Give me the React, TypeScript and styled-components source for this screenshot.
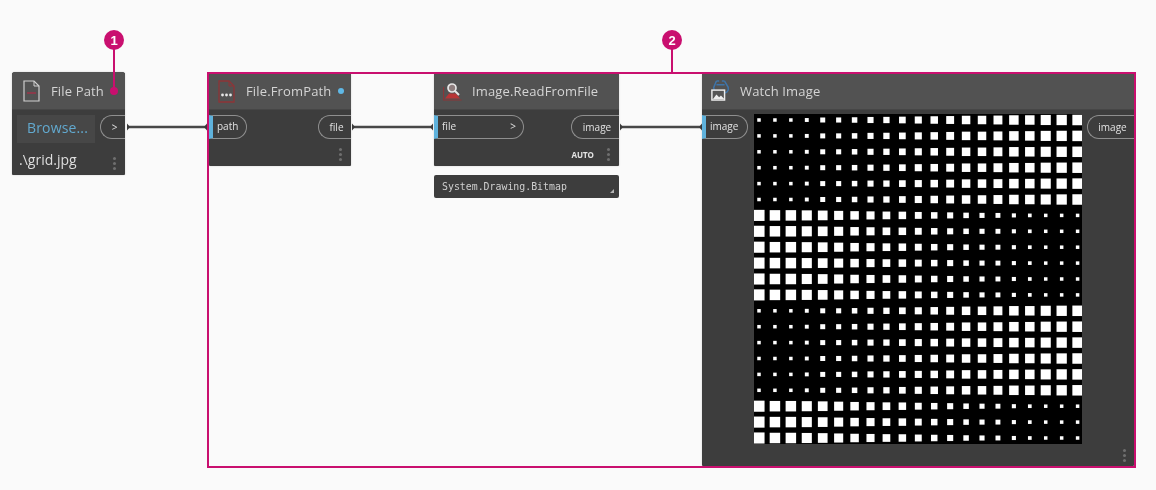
import React from "react";
import styled, { createGlobalStyle } from "styled-components";

const Global = createGlobalStyle`
  html, body { margin: 0; padding: 0; background: #fafafa; }
  #root { width: 1156px; height: 490px; overflow: hidden; }
`;

const Canvas = styled.div`
  position: relative;
  width: 1156px;
  height: 490px;
  background: #fafafa;
  overflow: hidden;
  font-family: "Open Sans", "Noto Sans", sans-serif;
  filter: blur(0.35px);
`;

const Node = styled.section<{ $x: number; $y: number; $w: number; $h: number }>`
  position: absolute;
  left: ${(p) => p.$x}px;
  top: ${(p) => p.$y}px;
  width: ${(p) => p.$w}px;
  height: ${(p) => p.$h}px;
  display: flex;
  flex-direction: column;
  background: #3d3d3d;
  border-radius: 3px 3px 1px 1px;
  overflow: hidden;
  box-shadow: 0 0 2px rgba(0, 0, 0, 0.18);
`;

const Header = styled.header<{ $h: number; $pad: number }>`
  flex: none;
  height: ${(p) => p.$h}px;
  padding-left: ${(p) => p.$pad}px;
  display: flex;
  align-items: center;
  gap: 10px;
  background: #525252;
  box-shadow: 0 1px 0 #464646;
`;

const Title = styled.span`
  color: #d4d4d4;
  font-size: 13px;
  letter-spacing: 0.15px;
  white-space: nowrap;
`;

const StatusDot = styled.i`
  width: 6px;
  height: 6px;
  margin-left: -3px;
  border-radius: 50%;
  background: #5fb8e6;
`;

const Body = styled.div`
  flex: 1;
  min-height: 0;
  position: relative;
  display: flex;
  flex-direction: column;
  padding-top: 6px;
`;

const PortRow = styled.div`
  display: flex;
  justify-content: space-between;
  align-items: flex-start;
  gap: 6px;
`;

const Port = styled.div<{ $side: "in" | "out"; $w: number }>`
  box-sizing: border-box;
  flex: none;
  width: ${(p) => p.$w}px;
  height: 24px;
  display: flex;
  align-items: center;
  justify-content: ${(p) => (p.$side === "in" ? "space-between" : "center")};
  padding: ${(p) => (p.$side === "in" ? "0 7px 2px 4px" : "0 0 0 3px")};
  color: #e2e2e2;
  font-size: 10px;
  border: 1px solid #8f8f8f;
  ${(p) =>
    p.$side === "in"
      ? `border-left: 4px solid #5fb2dc; border-radius: 0 12px 12px 0;`
      : `border-right: none; border-radius: 12px 0 0 12px;`}
`;

const Browse = styled.div`
  flex: none;
  box-sizing: border-box;
  width: 78px;
  height: 28px;
  padding: 0 0 4px 3px;
  display: flex;
  align-items: center;
  justify-content: center;
  background: #474747;
  color: #62a9cf;
  font-size: 14px;
  letter-spacing: 0.15px;
`;

const BrowseRow = styled.div`
  display: flex;
  justify-content: space-between;
  align-items: flex-start;
  padding-left: 5px;
`;

const PathText = styled.div`
  margin: 7px 0 0 7px;
  color: #dedede;
  font-size: 14px;
`;

const Kebab = styled.span<{ $r: number; $b: number }>`
  position: absolute;
  right: ${(p) => p.$r}px;
  bottom: ${(p) => p.$b}px;
  display: flex;
  flex-direction: column;
  gap: 2px;
  & > i {
    width: 3px;
    height: 3px;
    border-radius: 50%;
    background: #6f6f6f;
  }
`;

const Auto = styled.span`
  position: absolute;
  right: 25px;
  bottom: 6px;
  color: #e4e4e4;
  font-size: 8px;
  font-weight: 700;
`;

const Preview = styled.div`
  position: absolute;
  left: 434px;
  top: 175px;
  width: 185px;
  height: 23px;
  box-sizing: border-box;
  padding-left: 8px;
  display: flex;
  align-items: center;
  background: #3d3d3d;
  border-radius: 2px;
  color: #cfcfcf;
  font-family: "DejaVu Sans Mono", "Liberation Mono", monospace;
  font-size: 9.9px;
`;

const Grip = styled.i`
  position: absolute;
  right: 5px;
  bottom: 5px;
  width: 0;
  height: 0;
  border-left: 4px solid transparent;
  border-bottom: 4px solid #b5b5b5;
`;

const WatchRow = styled.div`
  display: flex;
  align-items: flex-start;
  margin-top: -1px;
`;

const WatchPort = styled(Port)`
  margin-top: 1px;
`;

const Group = styled.div`
  position: absolute;
  left: 207px;
  top: 72px;
  width: 929px;
  height: 396px;
  box-sizing: border-box;
  border: 2px solid #c90f6f;
  pointer-events: none;
`;

const Badge = styled.div<{ $x: number }>`
  position: absolute;
  left: ${(p) => p.$x - 10}px;
  top: 30px;
  width: 20px;
  height: 20px;
  display: flex;
  align-items: center;
  justify-content: center;
  border-radius: 50%;
  background: #c90f6f;
  color: #fff;
  font-family: "Liberation Sans", sans-serif;
  font-weight: 700;
  font-size: 13px;
`;

const Leader = styled.div<{ $x: number; $h: number }>`
  position: absolute;
  left: ${(p) => p.$x - 1}px;
  top: 40px;
  width: 2px;
  height: ${(p) => p.$h}px;
  background: #c90f6f;
`;

const LeaderDot = styled.div`
  position: absolute;
  left: 110px;
  top: 87px;
  width: 8px;
  height: 8px;
  border-radius: 50%;
  background: #c90f6f;
`;

const Wires = styled.svg`
  position: absolute;
  left: 0;
  top: 0;
  pointer-events: none;
`;

const Dots = () => (
  <>
    <i />
    <i />
    <i />
  </>
);

const FileIcon = () => (
  <svg width="18" height="22" viewBox="0 0 18 22" fill="none">
    <path d="M1 1h10l5 5v15H1z" stroke="#cfcfcf" strokeWidth="1.2" />
    <path d="M11 1v5h5" stroke="#cfcfcf" strokeWidth="1" />
    <path d="M4 13h9" stroke="#8a3a4a" strokeWidth="2" />
  </svg>
);

const FromPathIcon = () => (
  <svg width="18" height="23" viewBox="0 0 18 23" fill="none">
    <path d="M1 1h10l5 5v16H1z" stroke="#8e3437" strokeWidth="1.3" />
    <path d="M11 1v5h5" stroke="#8e3437" strokeWidth="1" />
    <circle cx="4.5" cy="15" r="1.4" fill="#e8e8e8" />
    <circle cx="8.5" cy="15" r="1.4" fill="#e8e8e8" />
    <circle cx="12.5" cy="15" r="1.4" fill="#e8e8e8" />
  </svg>
);

const ReadIcon = () => (
  <svg width="19" height="19" viewBox="0 0 19 19" fill="none">
    <path d="M0.6 5v13h18" stroke="#8e3437" strokeWidth="1.1" />
    <path d="M2 16.5l4-5h7l4 5z" fill="#b83536" />
    <circle cx="9" cy="6" r="4" fill="#8d7d7d" stroke="#e6e6e6" strokeWidth="1.7" />
    <path d="M12 9l4 4" stroke="#e6e6e6" strokeWidth="1.9" />
  </svg>
);

const WatchIcon = () => (
  <svg width="19" height="22" viewBox="0 0 21 24" fill="none">
    <path
      d="M6 1L3 8c0 4 3 6 6 6M15 1l4 7c1 4-2 7-6 6M6 5h9M6 1h3M12 1h3"
      stroke="#3f74a8"
      strokeWidth="1.7"
    />
    <rect x="1" y="11" width="14" height="11" fill="#555" stroke="#ececec" strokeWidth="1.6" />
    <path d="M2 21l4-5 3 3 2-2 4 4z" fill="#ececec" />
  </svg>
);

const sizeUp = [3, 3, 3, 3.4, 4.5, 4.6, 5, 5.6, 5.8, 6.2, 6.6, 7, 7.4, 8, 8, 8.4, 9, 9, 9.6, 9.8, 10];
const sizeDown = [10.6, 10, 10, 9.6, 9.2, 8.6, 8, 7.6, 7.2, 7, 6.4, 6, 5.6, 5, 4.6, 4.4, 3.6, 3.2, 3, 3, 3];

const Halftone = styled.svg`
  flex: none;
  display: block;
  margin: 0 5px 0 6px;
  background: #000;
`;

const HalftoneImage = () => {
  const squares: React.ReactNode[] = [];
  for (let r = 0; r < 21; r++) {
    const table = r < 6 || (r >= 12 && r < 18) ? sizeUp : sizeDown;
    for (let c = 0; c < 21; c++) {
      const s = table[c] + 0.5;
      const cx = 5 + c * 15.93;
      const cy = 6 + r * 15.9;
      squares.push(<rect key={`${r}-${c}`} x={cx - s / 2} y={cy - s / 2} width={s} height={s} fill="#fff" />);
    }
  }
  return (
    <Halftone width="328" height="330" viewBox="0 0 328 330">
      {squares}
    </Halftone>
  );
};

const wires = [
  [127, 207],
  [352, 433],
  [620, 702],
];

export default function App() {
  return (
    <Canvas>
      <Global />
      <Wires width="1156" height="490" viewBox="0 0 1156 490">
        {wires.map(([a, b]) => (
          <g key={a}>
            <path d={`M${a} 127H${b}`} stroke="#474747" strokeWidth="2.4" />
            <path d={`M${a} 123.5l3 3.5l-3 3.5z`} fill="#3a3a3a" />
            <path d={`M${b} 123.5l-3 3.5l3 3.5z`} fill="#3a3a3a" />
          </g>
        ))}
      </Wires>

      <Node $x={12} $y={72} $w={113} $h={103}>
        <Header $h={37} $pad={11}>
          <FileIcon />
          <Title>File Path</Title>
        </Header>
        <Body>
          <BrowseRow>
            <Browse>Browse...</Browse>
            <Port $side="out" $w={25}>&gt;</Port>
          </BrowseRow>
          <PathText>.\grid.jpg</PathText>
          <Kebab $r={9} $b={5}>
            <Dots />
          </Kebab>
        </Body>
      </Node>

      <Node $x={209} $y={73} $w={142} $h={93}>
        <Header $h={36} $pad={9}>
          <FromPathIcon />
          <Title>File.FromPath</Title>
          <StatusDot />
        </Header>
        <Body>
          <PortRow>
            <Port $side="in" $w={38}>path</Port>
            <Port $side="out" $w={33}>file</Port>
          </PortRow>
          <Kebab $r={9} $b={5}>
            <Dots />
          </Kebab>
        </Body>
      </Node>

      <Node $x={434} $y={73} $w={185} $h={93}>
        <Header $h={36} $pad={9}>
          <ReadIcon />
          <Title>Image.ReadFromFile</Title>
        </Header>
        <Body>
          <PortRow>
            <Port $side="in" $w={90}>
              <span>file</span>
              <span>&gt;</span>
            </Port>
            <Port $side="out" $w={48}>image</Port>
          </PortRow>
          <Auto>AUTO</Auto>
          <Kebab $r={9} $b={5}>
            <Dots />
          </Kebab>
        </Body>
      </Node>

      <Preview>
        System.Drawing.Bitmap
        <Grip />
      </Preview>

      <Node $x={702} $y={73} $w={432} $h={393}>
        <Header $h={36} $pad={9}>
          <WatchIcon />
          <Title>Watch Image</Title>
        </Header>
        <Body>
          <WatchRow>
            <WatchPort $side="in" $w={46}>image</WatchPort>
            <HalftoneImage />
            <WatchPort $side="out" $w={47}>image</WatchPort>
          </WatchRow>
          <Kebab $r={8} $b={4}>
            <Dots />
          </Kebab>
        </Body>
      </Node>

      <Group />
      <Leader $x={114} $h={50} />
      <LeaderDot />
      <Badge $x={114}>1</Badge>
      <Leader $x={672} $h={32} />
      <Badge $x={672}>2</Badge>
    </Canvas>
  );
}
